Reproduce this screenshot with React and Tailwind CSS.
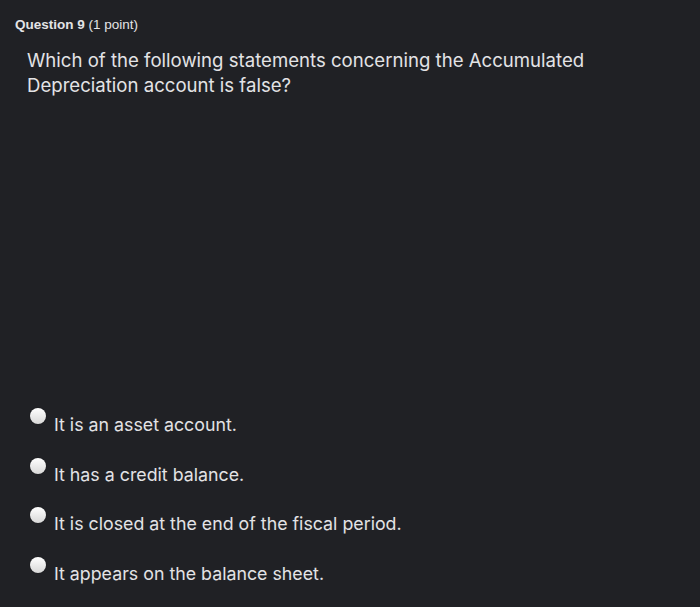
import React from 'react';

const options = [
  'It is an asset account.',
  'It has a credit balance.',
  'It is closed at the end of the fiscal period.',
  'It appears on the balance sheet.',
];

const App = () => {
  return (
    <div
      className="w-[700px] h-[607px] bg-[#202125] text-[#e4e4e6] overflow-hidden"
      style={{ fontFamily: 'Inter, "Liberation Sans", Arial, sans-serif' }}
    >
      <div
        className="pl-[15px] pt-[16px] text-[13.5px] leading-[17px]"
        style={{ fontFamily: '"Liberation Sans", Arial, sans-serif' }}
      >
        <span className="font-bold">Question 9</span> <span>(1 point)</span>
      </div>

      <p className="pl-[27px] pt-[15px] text-[18.6px] leading-[25px] text-[#e3e3e5]">
        Which of the following statements concerning the Accumulated
        <br />
        Depreciation account is false?
      </p>

      <div className="pl-[30px] pt-[310px] flex flex-col gap-[22.5px]">
        {options.map((opt) => (
          <div key={opt} className="flex items-start">
            <div className="w-[16px] h-[16px] rounded-full bg-gradient-to-b from-white to-[#d8d8d8] shadow-[0_0_1px_rgba(0,0,0,0.6)]"></div>
            <span className="ml-[8px] mt-[7px] text-[17.8px] leading-[20px] text-[#e3e3e5]">{opt}</span>
          </div>
        ))}
      </div>
    </div>
  );
};

export default App;
